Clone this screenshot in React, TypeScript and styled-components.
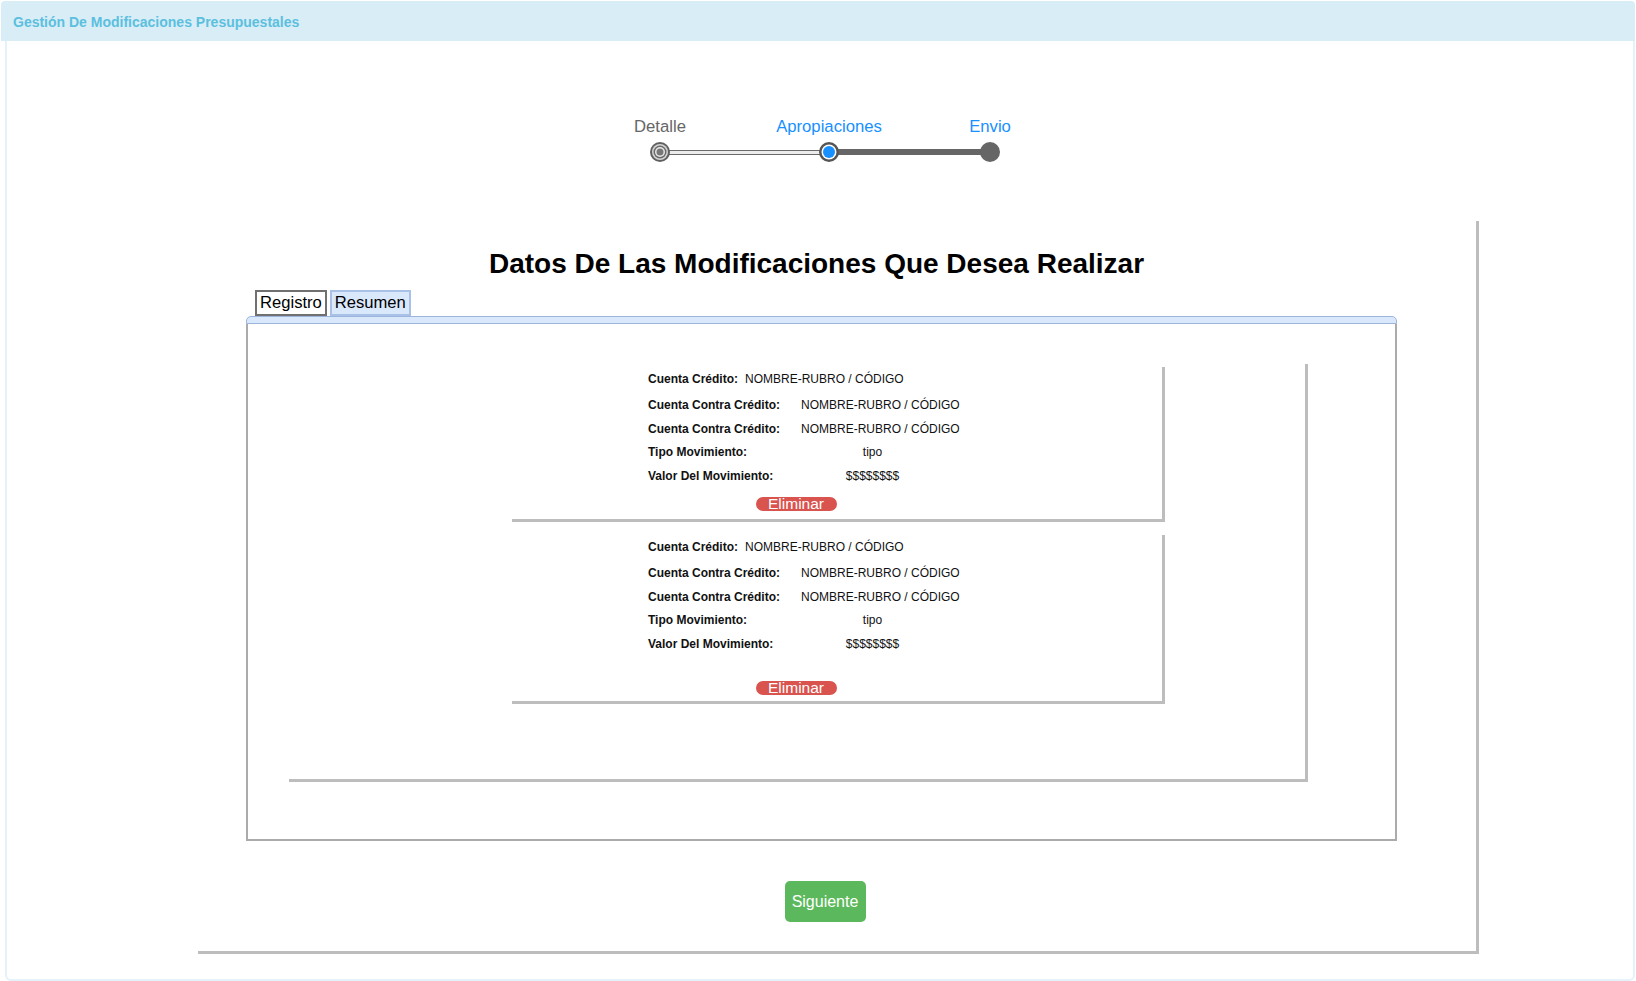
import React from "react";
import styled, { createGlobalStyle } from "styled-components";

const GlobalStyle = createGlobalStyle`
  html, body { margin: 0; padding: 0; background: #ffffff; }
  body { font-family: "Liberation Sans", Arial, sans-serif; color: #111; }
  *, *::before, *::after { box-sizing: border-box; }
`;

const Page = styled.div`
  width: 1636px;
  height: 981px;
  display: flex;
  flex-direction: column;
  padding: 1px 1px 0 1px;
  overflow: hidden;
`;

const Header = styled.header`
  height: 40px;
  flex: none;
  background: #d9edf7;
  border-radius: 4px 4px 0 0;
  padding: 2px 12px 0;
  display: flex;
  align-items: center;
  font-weight: bold;
  font-size: 14px;
  color: #5bc0de;
`;

const Body = styled.main`
  flex: 1;
  margin-left: 4px;
  border: 2px solid #e6f2fa;
  border-top: none;
  border-radius: 0 0 6px 6px;
  display: flex;
  flex-direction: column;
  align-items: flex-start;
`;

const Stepper = styled.div`
  margin: 77px 0 0 643px;
  display: grid;
  grid-template-columns: 20px 149px 20px 141px 20px;
  grid-template-rows: 18px 20px;
  row-gap: 6px;
`;

const StepLabel = styled.div<{ $col: number; $active: boolean }>`
  grid-row: 1;
  grid-column: ${(p) => p.$col};
  display: flex;
  justify-content: center;
  white-space: nowrap;
  font-size: 16.7px;
  line-height: 18px;
  color: ${(p) => (p.$active ? "#1890ff" : "#666666")};
`;

const StepDot = styled.svg<{ $col: number }>`
  grid-row: 2;
  grid-column: ${(p) => p.$col};
  width: 20px;
  height: 20px;
  position: relative;
  z-index: 1;
`;

const Connector = styled.div<{ $col: number; $done: boolean }>`
  grid-row: 2;
  grid-column: ${(p) => p.$col};
  align-self: center;
  margin: 0 -3px;
  height: ${(p) => (p.$done ? "5px" : "6px")};
  background: ${(p) => (p.$done ? "#ececec" : "#666666")};
  border-top: ${(p) => (p.$done ? "1.5px solid #6a6a6a" : "none")};
  border-bottom: ${(p) => (p.$done ? "1.5px solid #6a6a6a" : "none")};
`;

const MainCard = styled.section`
  margin: 59px 0 0 191px;
  width: 1281px;
  height: 733px;
  border-right: 3px solid #bdbdbd;
  border-bottom: 3px solid #bdbdbd;
  padding: 26.5px 79px 0 48px;
  display: flex;
  flex-direction: column;
`;

const Title = styled.h1`
  margin: 0;
  padding-right: 10px;
  font-size: 28px;
  line-height: 32px;
  font-weight: bold;
  text-align: center;
  color: #000;
`;

const TabList = styled.div`
  margin: 10.5px 0 0 9px;
  display: flex;
  gap: 3px;
`;

const Tab = styled.button<{ $active: boolean }>`
  height: 26px;
  padding: 0 3px;
  margin: 0;
  font-family: "Liberation Sans", Arial, sans-serif;
  font-size: 16.6px;
  line-height: 22px;
  color: #000;
  background: ${(p) => (p.$active ? "#ffffff" : "#dae8fc")};
  border: 2px solid ${(p) => (p.$active ? "#707070" : "#a9c1e6")};
  cursor: pointer;
`;

const PanelBar = styled.div`
  height: 8px;
  background: #dae8fc;
  border: 1px solid #9db5dd;
  border-radius: 5px 5px 0 0;
`;

const PanelContent = styled.div`
  height: 517px;
  border: 2px solid #ababab;
  border-top: none;
  padding: 40px 0 0 41px;
`;

const ListBox = styled.div`
  width: 1019px;
  height: 418px;
  border-right: 3px solid #bdbdbd;
  border-bottom: 3px solid #bdbdbd;
  padding: 3px 0 0 223px;
  display: flex;
  flex-direction: column;
  gap: 13px;
`;

const RecordCard = styled.div<{ $bottom: number }>`
  width: 653px;
  border-right: 3px solid #bdbdbd;
  border-bottom: 3px solid #bdbdbd;
  padding: 0 0 ${(p) => p.$bottom}px 136px;
`;

const CardContent = styled.div`
  width: 296px;
  display: flex;
  flex-direction: column;
`;

const FirstLine = styled.div`
  height: 24px;
  display: flex;
  align-items: center;
  gap: 7px;
  font-size: 12px;
  white-space: nowrap;
`;

const Fields = styled.div`
  margin-top: 2.25px;
  display: grid;
  grid-template-columns: 153px 143px;
  grid-auto-rows: 23.5px;
  align-items: center;
  font-size: 12px;
`;

const Label = styled.span`
  font-weight: bold;
  white-space: nowrap;
`;

const Value = styled.span`
  text-align: center;
  white-space: nowrap;
`;

const DeleteButton = styled.button<{ $top: number }>`
  align-self: center;
  margin-top: ${(p) => p.$top}px;
  width: 81px;
  height: 14px;
  padding: 0;
  border: none;
  border-radius: 7px;
  background: #d9534f;
  color: #fff;
  font-family: "Liberation Sans", Arial, sans-serif;
  font-size: 15.5px;
  line-height: 14px;
  cursor: pointer;
`;

const ButtonRow = styled.div`
  margin-top: 40px;
  padding-left: 7px;
  display: flex;
  justify-content: center;
`;

const NextButton = styled.button`
  width: 81px;
  height: 41px;
  padding: 0;
  border: none;
  border-radius: 5px;
  background: #5cb85c;
  color: #fff;
  font-family: "Liberation Sans", Arial, sans-serif;
  font-size: 16px;
  cursor: pointer;
`;

type Record = {
  credito: string;
  contra1: string;
  contra2: string;
  tipo: string;
  valor: string;
  buttonTop: number;
  bottom: number;
};

const records: Record[] = [
  {
    credito: "NOMBRE-RUBRO / CÓDIGO",
    contra1: "NOMBRE-RUBRO / CÓDIGO",
    contra2: "NOMBRE-RUBRO / CÓDIGO",
    tipo: "tipo",
    valor: "$$$$$$$$",
    buttonTop: 10,
    bottom: 8,
  },
  {
    credito: "NOMBRE-RUBRO / CÓDIGO",
    contra1: "NOMBRE-RUBRO / CÓDIGO",
    contra2: "NOMBRE-RUBRO / CÓDIGO",
    tipo: "tipo",
    valor: "$$$$$$$$",
    buttonTop: 25.75,
    bottom: 6,
  },
];

function RecordItem({ r }: { r: Record }) {
  return (
    <RecordCard $bottom={r.bottom}>
      <CardContent>
        <FirstLine>
          <Label>Cuenta Crédito:</Label>
          <span>{r.credito}</span>
        </FirstLine>
        <Fields>
          <Label>Cuenta Contra Crédito:</Label>
          <Value>{r.contra1}</Value>
          <Label>Cuenta Contra Crédito:</Label>
          <Value>{r.contra2}</Value>
          <Label>Tipo Movimiento:</Label>
          <Value>{r.tipo}</Value>
          <Label>Valor Del Movimiento:</Label>
          <Value>{r.valor}</Value>
        </Fields>
        <DeleteButton $top={r.buttonTop}>Eliminar</DeleteButton>
      </CardContent>
    </RecordCard>
  );
}

export default function App() {
  return (
    <>
      <GlobalStyle />
      <Page>
        <Header>Gestión De Modificaciones Presupuestales</Header>
        <Body>
          <Stepper>
            <StepLabel $col={1} $active={false}>Detalle</StepLabel>
            <StepLabel $col={3} $active={true}>Apropiaciones</StepLabel>
            <StepLabel $col={5} $active={true}>Envio</StepLabel>
            <StepDot $col={1} viewBox="0 0 20 20">
              <circle cx="10" cy="10" r="10" fill="#5f5f5f" />
              <circle cx="10" cy="10" r="8" fill="#d4d4d4" />
              <circle cx="10" cy="10" r="6.5" fill="#6a6a6a" />
              <circle cx="10" cy="10" r="5" fill="#e8e8e8" />
              <circle cx="10" cy="10" r="3.5" fill="#777" />
            </StepDot>
            <Connector $col={2} $done={true} />
            <StepDot $col={3} viewBox="0 0 20 20">
              <circle cx="10" cy="10" r="10" fill="#555" />
              <circle cx="10" cy="10" r="7.5" fill="#fff" />
              <circle cx="10" cy="10" r="6" fill="#1890ff" />
            </StepDot>
            <Connector $col={4} $done={false} />
            <StepDot $col={5} viewBox="0 0 20 20">
              <circle cx="10" cy="10" r="10" fill="#666" />
            </StepDot>
          </Stepper>
          <MainCard>
            <Title>Datos De Las Modificaciones Que Desea Realizar</Title>
            <TabList>
              <Tab $active={true}>Registro</Tab>
              <Tab $active={false}>Resumen</Tab>
            </TabList>
            <PanelBar />
            <PanelContent>
              <ListBox>
                {records.map((r, i) => (
                  <RecordItem key={i} r={r} />
                ))}
              </ListBox>
            </PanelContent>
            <ButtonRow>
              <NextButton>Siguiente</NextButton>
            </ButtonRow>
          </MainCard>
        </Body>
      </Page>
    </>
  );
}
